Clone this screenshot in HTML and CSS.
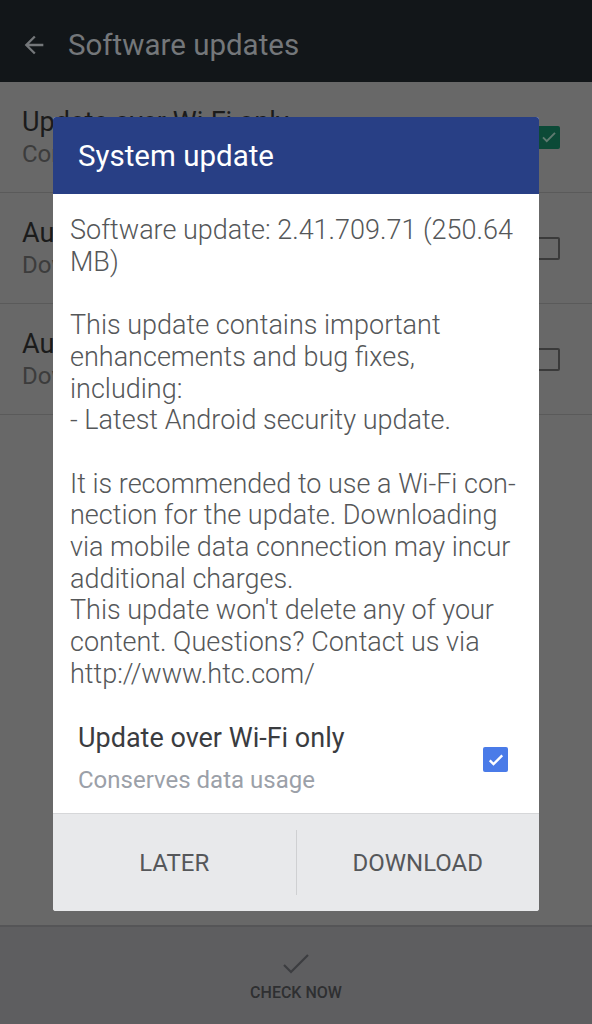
FILE: index.html
```html
<!DOCTYPE html>
<html lang="en">
<head>
    <meta charset="UTF-8">
    <title>Software updates</title>
    <link rel="stylesheet" href="styles.css">
</head>
<body>
<div class="screen">
    <!-- settings page behind the dialog (already dimmed) -->
    <div class="appbar">
        <svg class="back" width="28" height="28" viewBox="0 0 24 24">
            <path d="M20 11H7.8l5.6-5.6L12 4l-8 8 8 8 1.4-1.4L7.8 13H20z" fill="#74777a"/>
        </svg>
        <span class="appbar-title">Software updates</span>
    </div>

    <div class="list">
        <div class="list-row">
            <div class="list-text">
                <div class="list-title">Update over Wi-Fi only</div>
                <div class="list-sub">Conserves data usage</div>
            </div>
            <div class="box box-on">
                <svg width="18" height="18" viewBox="0 0 24 24"><path d="M4 12.5l5 5L20 6.5" fill="none" stroke="#5f7a70" stroke-width="2.6"/></svg>
            </div>
        </div>
        <div class="list-row">
            <div class="list-text">
                <div class="list-title">Auto-download system updates</div>
                <div class="list-sub">Download updates automatically</div>
            </div>
            <div class="box"></div>
        </div>
        <div class="list-row">
            <div class="list-text">
                <div class="list-title">Auto-download app updates</div>
                <div class="list-sub">Download app updates automatically</div>
            </div>
            <div class="box"></div>
        </div>
    </div>

    <div class="filler"></div>

    <div class="bottombar">
        <svg width="30" height="24" viewBox="0 0 30 24"><path d="M3 12l7 7L27 2" fill="none" stroke="#3c3d40" stroke-width="2.2"/></svg>
        <span class="check-label">CHECK NOW</span>
    </div>
</div>

<!-- the dialog -->
<div class="dialog">
    <div class="dialog-head">System update</div>
    <div class="dialog-body">
        <p>Software update: 2.41.709.71 (250.64 MB)</p>
        <p>This update contains important enhancements and bug fixes, including:<br>- Latest Android security update.</p>
        <p>It is recommended to use a Wi-Fi con&shy;nection for the update. Downloading via mobile data connection may incur additional charges.<br>This update won't delete any of your content. Questions? Contact us via http://www.htc.com/</p>
    </div>
    <div class="dialog-option">
        <div>
            <div class="option-title">Update over Wi-Fi only</div>
            <div class="option-sub">Conserves data usage</div>
        </div>
        <div class="blue-box">
            <svg width="20" height="20" viewBox="0 0 24 24"><path d="M4.5 12.5l4.5 4.5L19.5 6.5" fill="none" stroke="#fff" stroke-width="2.8"/></svg>
        </div>
    </div>
    <div class="dialog-buttons">
        <div class="btn">LATER</div>
        <div class="btn-divider"></div>
        <div class="btn">DOWNLOAD</div>
    </div>
</div>
</body>
</html>
```

FILE: styles.css
```css
/* --------------------
 Software updates screen with the system update dialog
 -------------------- */

:root {
    --bar-color: #121619;
    --list-color: #686868;
    --list-line: #5a5a5a;
    --bottom-color: #5e5e60;
    --dialog-blue: #283f85;
    --body-text: #555759;
    --btn-bg: #e8e9eb;
}

* {
    box-sizing: border-box;
    font-family: Roboto, "Liberation Sans", sans-serif;
}

body {
    margin: 0;
    width: 592px;
    height: 1024px;
    overflow: hidden;
    position: relative;
}

.screen {
    height: 1024px;
    display: flex;
    flex-direction: column;
    background-color: var(--list-color);
}

.appbar {
    height: 82px;
    background-color: var(--bar-color);
    display: flex;
    align-items: center;
    padding-left: 20px;
    padding-top: 8px;
}

.back {
    margin-right: 20px;
}

.appbar-title {
    color: #74777a;
    font-size: 29.5px;
}

.list-row {
    height: 111px;
    border-bottom: 1px solid var(--list-line);
    display: flex;
    align-items: center;
    justify-content: space-between;
    padding: 0 32px 0 22px;
}

.list-title {
    font-size: 27px;
    color: #1b1b1b;
    margin-bottom: 2px;
}

.list-sub {
    font-size: 24px;
    color: #3c3c3c;
}

.box {
    width: 23px;
    height: 23px;
    border: 2px solid #3a3a3a;
    border-radius: 2px;
}

.box-on {
    border: none;
    background-color: #0c4a37;
    display: flex;
    align-items: center;
    justify-content: center;
}

.filler {
    flex: 1;
}

.bottombar {
    height: 99px;
    background-color: var(--bottom-color);
    border-top: 2px solid #555557;
    display: flex;
    flex-direction: column;
    align-items: center;
    padding-top: 26px;
}

.check-label {
    margin-top: 6px;
    font-size: 16px;
    font-weight: 500;
    color: #2e2f31;
}

/* ---- dialog ---- */

.dialog {
    position: absolute;
    left: 53px;
    top: 117px;
    width: 486px;
    height: 794px;
    border-radius: 3px;
    overflow: hidden;
    background-color: #fff;
    display: flex;
    flex-direction: column;
}

.dialog-head {
    height: 77px;
    background-color: var(--dialog-blue);
    color: #fff;
    font-size: 29.5px;
    display: flex;
    align-items: center;
    padding-left: 25px;
}

.dialog-body {
    padding: 21px 17px 0 17px;
    color: var(--body-text);
    font-size: 27px;
    font-weight: 300;
    line-height: 31.7px;
}

.dialog-body p {
    margin: 0 0 31.7px 0;
}

.dialog-body p:last-child {
    margin-bottom: 0;
}

.dialog-option {
    flex: 1;
    display: flex;
    align-items: center;
    justify-content: space-between;
    padding: 12px 31px 0 25px;
}

.option-title {
    font-size: 27px;
    color: #3a3c3f;
    margin-bottom: 12px;
}

.option-sub {
    font-size: 24px;
    color: #9ba0a8;
}

.blue-box {
    width: 25px;
    height: 25px;
    border-radius: 2px;
    background-color: #4a7be8;
    display: flex;
    align-items: center;
    justify-content: center;
    margin-top: 4px;
}

.dialog-buttons {
    height: 98px;
    background-color: var(--btn-bg);
    border-top: 1px solid #d6d7d9;
    display: flex;
    align-items: center;
}

.btn {
    flex: 1;
    text-align: center;
    font-size: 24px;
    color: #55575a;
}

.btn-divider {
    width: 1px;
    height: 65px;
    background-color: #cfd0d2;
}
```
